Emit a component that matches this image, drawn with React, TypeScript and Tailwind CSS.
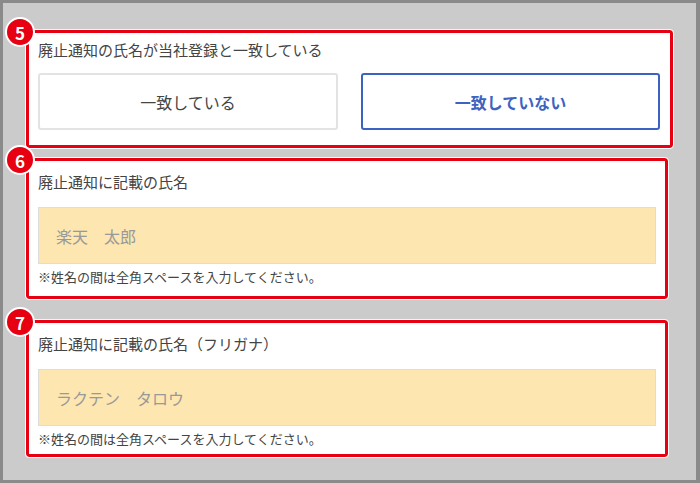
import React from "react";

const font = { fontFamily: '"Noto Sans CJK JP", "Noto Sans", sans-serif' };

function Badge({ n }: { n: string }) {
  return (
    <div className="absolute -left-[24px] -top-[16px] w-[30px] h-[30px] rounded-full bg-[#e60012] border-2 border-white text-white font-bold text-[17px] flex items-center justify-center leading-none">
      {n}
    </div>
  );
}

function Field({ label, ph }: { label: string; ph: string }) {
  return (
    <>
      <div className="text-[15px] text-[#444] leading-none ml-[9px] mt-[13px]">{label}</div>
      <div className="mx-[9px] mt-[18px] h-[57px] bg-[#fde6b0] border border-[#ddd] flex items-center pl-[17px] text-[16px] text-[#999]">
        {ph}
      </div>
      <div className="text-[13px] text-[#444] ml-[9px] mt-[6px] leading-none">※姓名の間は全角スペースを入力してください。</div>
    </>
  );
}

export default function App() {
  return (
    <div style={font} className="w-[700px] h-[483px] bg-[#cbcbcb] border-[3px] border-[#8a8a8a] border-r-[4px] pl-[23px] pt-[27px] flex flex-col">
      <div className="relative w-[647px] h-[118px] bg-white border-[3px] border-[#e60012] rounded-[3px] outline outline-1 outline-white">
        <Badge n="5" />
        <div className="text-[15px] text-[#444] leading-none ml-[9px] mt-[9px]">廃止通知の氏名が当社登録と一致している</div>
        <div className="flex gap-[23px] mx-[9px] mt-[16px]">
          <div className="w-[300px] h-[57px] border-2 border-[#e3e3e3] rounded-[3px] flex items-center justify-center text-[16px] text-[#444]">一致している</div>
          <div className="w-[299px] h-[57px] border-2 border-[#3c63c0] rounded-[3px] flex items-center justify-center text-[16px] font-bold text-[#3c63c0]">一致していない</div>
        </div>
      </div>
      <div className="relative w-[642px] h-[141px] mt-[10px] bg-white border-[3px] border-[#e60012] rounded-[3px] outline outline-1 outline-white">
        <Badge n="6" />
        <Field label="廃止通知に記載の氏名" ph="楽天　太郎" />
      </div>
      <div className="relative w-[642px] h-[137px] mt-[21px] bg-white border-[3px] border-[#e60012] rounded-[3px] outline outline-1 outline-white">
        <Badge n="7" />
        <Field label="廃止通知に記載の氏名（フリガナ）" ph="ラクテン　タロウ" />
      </div>
    </div>
  );
}
